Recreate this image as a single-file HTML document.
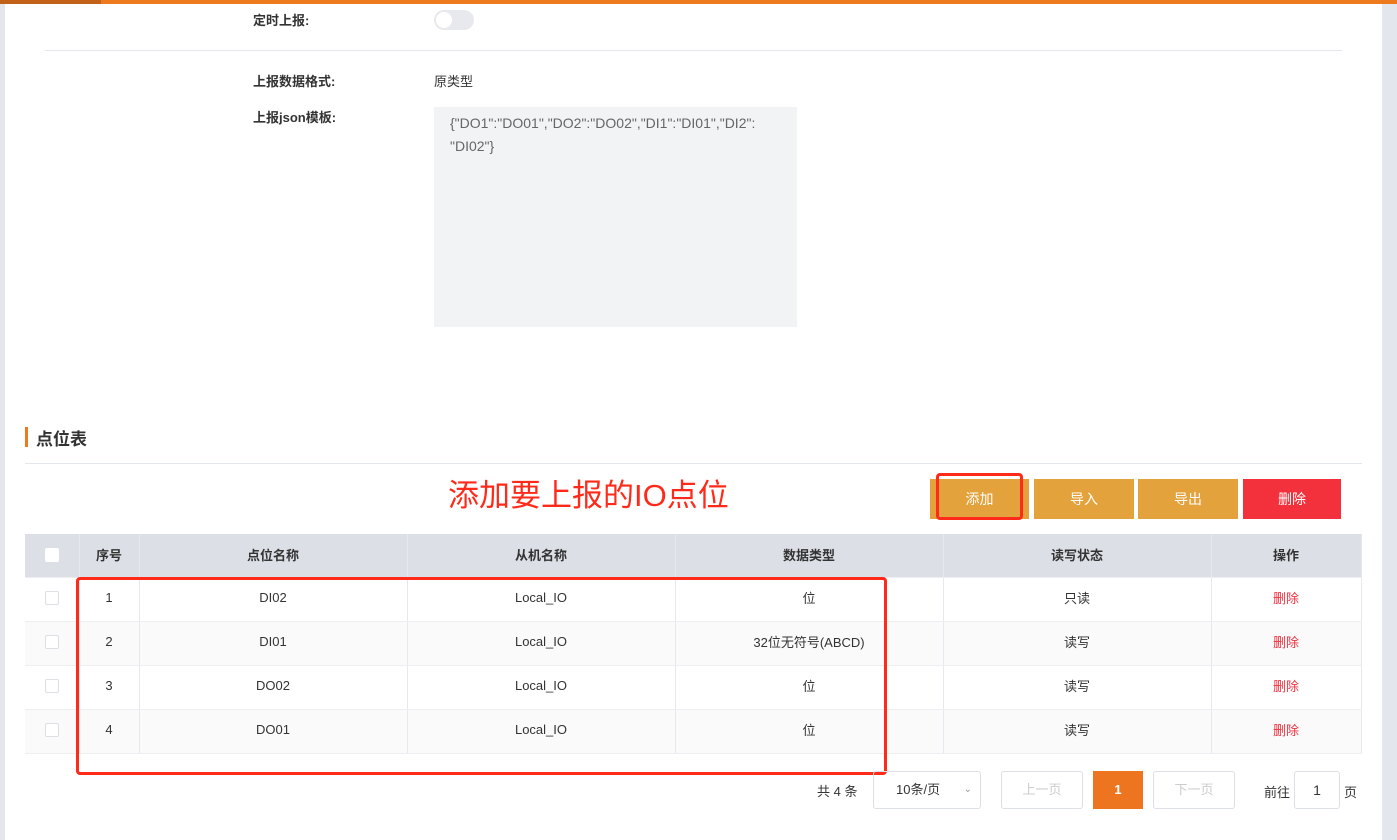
<!DOCTYPE html>
<html><head><meta charset="utf-8"><style>
*{margin:0;padding:0;box-sizing:border-box}
body{width:1397px;height:840px;overflow:hidden;background:#fff;font-family:"Liberation Sans","Noto Sans CJK SC",sans-serif;font-size:14px;color:#333;position:relative}
.a{position:absolute}
.lbl{font-weight:bold;font-size:13px;color:#333}
table{border-collapse:collapse;position:absolute;left:25px;top:534px;width:1336px;table-layout:fixed}
td,th{height:44px;text-align:center;font-size:13px;border-right:1px solid #e6e8ee;border-bottom:1px solid #eceef2;padding-bottom:3px}
th{background:#dcdfe6;height:43px;font-weight:bold;color:#333;padding-bottom:2px}
tr:nth-child(odd) td{background:#fafafa}
.cb{display:inline-block;width:14px;height:14px;border:1px solid #dcdfe6;border-radius:2px;background:#fff;vertical-align:middle}
.del{color:#f0313f}
.btn{position:absolute;top:479px;height:40px;color:#fff;font-size:14px;text-align:center;line-height:40px}
.pg{position:absolute;top:771px;height:38px;border:1px solid #dcdfe6;border-radius:3px;text-align:center;line-height:36px;font-size:13px;color:#ccc}
</style></head><body>
<div class="a" style="left:0;top:0;width:1397px;height:4px;background:#ee7a20"></div>
<div class="a" style="left:0;top:0;width:101px;height:4px;background:#c26118"></div>
<div class="a" style="left:0;top:4px;width:5px;height:836px;background:#e4e6ee"></div>
<div class="a" style="left:1382px;top:4px;width:15px;height:836px;background:#e4e6ee"></div>

<div class="a lbl" style="left:253px;top:10px">定时上报:</div>
<div class="a" style="left:434px;top:10px;width:40px;height:20px;border-radius:10px;background:#e8e9ee"><div style="position:absolute;left:2px;top:2px;width:16px;height:16px;border-radius:50%;background:#fff"></div></div>
<div class="a" style="left:45px;top:50px;width:1297px;height:1px;background:#e4e6ee"></div>
<div class="a lbl" style="left:253px;top:71px">上报数据格式:</div>
<div class="a" style="left:434px;top:71px;font-size:13px">原类型</div>
<div class="a lbl" style="left:253px;top:107px">上报json模板:</div>
<div class="a" style="left:434px;top:107px;width:363px;height:220px;background:#f2f3f5;padding:5px 16px;font-size:14px;line-height:23px;color:#666">{"DO1":"DO01","DO2":"DO02","DI1":"DI01","DI2":<br>"DI02"}</div>

<div class="a" style="left:25px;top:427px;width:3px;height:20px;background:#ee7a20"></div>
<div class="a" style="left:36px;top:425px;font-size:17px;font-weight:bold;color:#333">点位表</div>
<div class="a" style="left:25px;top:463px;width:1337px;height:1px;background:#e4e6ee"></div>
<div class="a" style="left:448px;top:470px;font-size:31px;color:#ff2a1a">添加要上报的IO点位</div>

<div class="btn" style="left:930px;width:99px;background:#e4a23c">添加</div>
<div class="btn" style="left:1034px;width:100px;background:#e4a23c">导入</div>
<div class="btn" style="left:1138px;width:100px;background:#e4a23c">导出</div>
<div class="btn" style="left:1243px;width:98px;background:#f2313c">删除</div>
<div class="a" style="left:936px;top:473px;width:87px;height:47px;border:3px solid #ff2a1a;border-radius:4px"></div>

<table>
<colgroup><col style="width:54px"><col style="width:60px"><col style="width:268px"><col style="width:268px"><col style="width:268px"><col style="width:268px"><col style="width:150px"></colgroup>
<tr><th><span class="cb" style="border:none"></span></th><th>序号</th><th>点位名称</th><th>从机名称</th><th>数据类型</th><th>读写状态</th><th>操作</th></tr>
<tr><td><span class="cb"></span></td><td>1</td><td>DI02</td><td>Local_IO</td><td>位</td><td>只读</td><td class="del">删除</td></tr>
<tr><td><span class="cb"></span></td><td>2</td><td>DI01</td><td>Local_IO</td><td>32位无符号(ABCD)</td><td>读写</td><td class="del">删除</td></tr>
<tr><td><span class="cb"></span></td><td>3</td><td>DO02</td><td>Local_IO</td><td>位</td><td>读写</td><td class="del">删除</td></tr>
<tr><td><span class="cb"></span></td><td>4</td><td>DO01</td><td>Local_IO</td><td>位</td><td>读写</td><td class="del">删除</td></tr>
</table>
<div class="a" style="left:76px;top:577px;width:811px;height:198px;border:3px solid #ff2a1a;border-radius:4px"></div>

<div class="a" style="left:817px;top:781px;font-size:13px">共 4 条</div>
<div class="pg" style="left:873px;width:108px;color:#333;text-align:left;padding-left:22px">10条/页<span style="position:absolute;right:8px;top:0;font-size:10px;color:#999">&#8964;</span></div>
<div class="pg" style="left:1001px;width:82px">上一页</div>
<div class="pg" style="left:1093px;width:50px;background:#ee7520;border-color:#ee7520;color:#fff;font-weight:bold;border-radius:0">1</div>
<div class="pg" style="left:1153px;width:82px">下一页</div>
<div class="a" style="left:1264px;top:782px;font-size:13px">前往</div>
<div class="pg" style="left:1294px;width:46px;color:#333;font-size:14px">1</div>
<div class="a" style="left:1344px;top:782px;font-size:13px">页</div>
</body></html>
